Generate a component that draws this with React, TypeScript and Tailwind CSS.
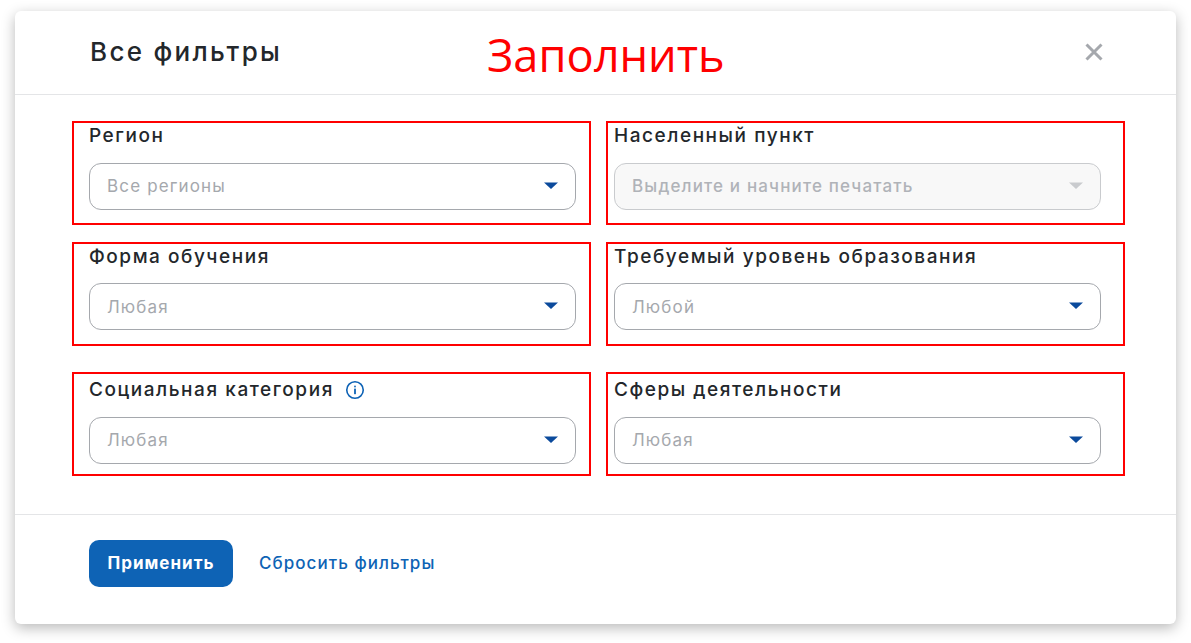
import React from "react";

const font = "font-['Inter','Noto_Sans',sans-serif]";

function Caret({ disabled }: { disabled?: boolean }) {
  return (
    <svg width="14" height="7" viewBox="0 0 14 7" className="shrink-0">
      <path d="M0 0.5H14L7 7Z" fill={disabled ? "#c9cbce" : "#0b4a9c"} />
    </svg>
  );
}

function Field({
  label,
  value,
  disabled,
  info,
  right,
  labelClass = "",
  inputClass = "mt-[15px]",
  valueClass = "",
}: {
  label: string;
  value: string;
  disabled?: boolean;
  info?: boolean;
  right?: boolean;
  labelClass?: string;
  inputClass?: string;
  valueClass?: string;
}) {
  return (
    <div className={`h-[104px] border-2 border-[#ff0000] flex flex-col ${right ? "pl-[6px] pr-[22px]" : "pl-[15px] pr-[13px]"}`}>
      <div className={`flex items-center h-[24px] mt-[1px] text-[19px] leading-[24px] font-medium text-[#23272b] tracking-[1.55px] ${labelClass}`}>
        {label}
        {info && (
          <svg width="20" height="20" viewBox="0 0 20 20" className="ml-[11px]">
            <circle cx="10" cy="10" r="8.25" fill="none" stroke="#0d62b5" strokeWidth="1.6" />
            <rect x="9.1" y="8.6" width="1.8" height="5.6" rx="0.4" fill="#0d62b5" />
            <rect x="9.1" y="5.6" width="1.8" height="1.8" rx="0.9" fill="#0d62b5" />
          </svg>
        )}
      </div>
      <div
        className={`h-[47px] rounded-[12px] border flex items-center justify-between pl-[17px] pr-[17px] ${inputClass} ${
          disabled ? "bg-[#f8f8f8] border-[#c9cbce] text-[#b0b3b8]" : "bg-white border-[#a5a8ad] text-[#a5a8ad]"
        } text-[17px] tracking-[1.15px]`}
      >
        <span className={`${disabled ? "font-medium" : ""} ${valueClass}`}>{value}</span>
        <span className="-mt-[2px] flex"><Caret disabled={disabled} /></span>
      </div>
    </div>
  );
}

export default function App() {
  return (
    <div className={`w-[1191px] h-[643px] bg-white pt-[11px] pl-[15px] overflow-hidden ${font}`}>
      <div className="relative w-[1161px] h-[613px] bg-white rounded-[6px] shadow-[0_4px_14px_rgba(0,0,0,0.28)] flex flex-col">
        <div className="h-[84px] shrink-0 border-b border-[#e4e5e7] pl-[75px] pr-[73px] flex items-center justify-between">
          <h1 className="text-[26px] leading-[32px] font-medium text-[#23272b] -mt-[2px] tracking-[2.3px]">Все фильтры</h1>
          <svg width="18" height="18" viewBox="0 0 18 18" className="-mt-[2px]">
            <path d="M1.5 1.5L16.5 16.5M16.5 1.5L1.5 16.5" stroke="#a5a8ad" strokeWidth="3" />
          </svg>
        </div>
        <span className="absolute left-[472px] top-[14px] font-['Open_Sans',sans-serif] text-[45.2px] leading-[60px] text-[#ff0000]">Заполнить</span>

        <div className="h-[420px] shrink-0 border-b border-[#e4e5e7] pl-[57px] pt-[26px]">
          <div className="grid grid-cols-[519px_519px] gap-x-[15px] w-[1053px]">
            <Field label="Регион" value="Все регионы" />
            <Field label="Населенный пункт" value="Выделите и начните печатать" disabled right />
            <div className="col-span-2 h-[17px]" />
            <Field label="Форма обучения" value="Любая" inputClass="mt-[14px]" valueClass="mt-[2px]" />
            <Field label="Требуемый уровень образования" value="Любой" right inputClass="mt-[14px]" valueClass="mt-[2px]" />
            <div className="col-span-2 h-[26px]" />
            <Field label="Социальная категория" value="Любая" info labelClass="mt-[4px]" />
            <Field label="Сферы деятельности" value="Любая" right labelClass="mt-[4px]" />
          </div>
        </div>

        <div className="flex items-center pl-[74px] pt-[25px]">
          <button className="w-[144px] h-[47px] rounded-[10px] bg-[#0e63b5] text-white text-[17px] font-bold tracking-[1px] pt-[1px]">Применить</button>
          <a className="ml-[26px] pt-[1px] text-[17px] font-medium text-[#0e63b5] tracking-[1.05px]">Сбросить фильтры</a>
        </div>
      </div>
    </div>
  );
}
